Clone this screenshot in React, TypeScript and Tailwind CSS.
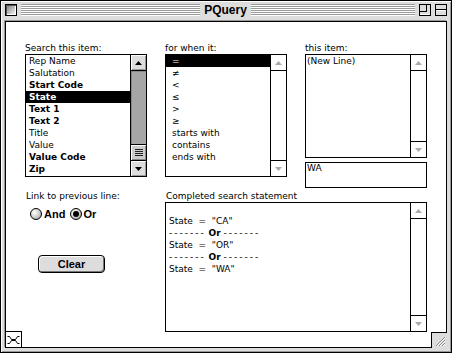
import React from "react";

const Up = ({ c }: { c: string }) => (
  <svg width="7" height="4" viewBox="0 0 7 4">
    <polygon points="3.5,0 7,4 0,4" fill={c} />
  </svg>
);
const Down = ({ c }: { c: string }) => (
  <svg width="7" height="4" viewBox="0 0 7 4">
    <polygon points="0,0 7,0 3.5,4" fill={c} />
  </svg>
);

const ActiveScroll = () => (
  <div className="w-[16px] border-l border-black flex flex-col">
    <div className="h-[16px] border-b border-black bg-[#dddddd] flex items-center justify-center shadow-[inset_1px_1px_0_#fff,inset_-1px_-1px_0_#999]">
      <Up c="#000" />
    </div>
    <div className="flex-1 bg-[#a6a6a6] flex flex-col justify-end shadow-[inset_1px_1px_0_#888]">
      <div className="h-[16px] border-t border-black bg-[#cccccc] flex flex-col items-center justify-center gap-[1px] shadow-[inset_1px_1px_0_#fff,inset_-1px_-1px_0_#888]">
        <div className="w-[8px] h-[1px] bg-[#222]" />
        <div className="w-[8px] h-[1px] bg-[#222]" />
        <div className="w-[8px] h-[1px] bg-[#222]" />
        <div className="w-[8px] h-[1px] bg-[#222]" />
      </div>
    </div>
    <div className="h-[16px] border-t border-black bg-[#dddddd] flex items-center justify-center shadow-[inset_1px_1px_0_#fff,inset_-1px_-1px_0_#999]">
      <Down c="#000" />
    </div>
  </div>
);

const InactiveScroll = () => (
  <div className="w-[16px] border-l border-black bg-white flex flex-col justify-between">
    <div className="h-[16px] border-b border-black flex items-center justify-center">
      <Up c="#aaaaaa" />
    </div>
    <div className="h-[16px] border-t border-black flex items-center justify-center">
      <Down c="#aaaaaa" />
    </div>
  </div>
);

type Item = { t: string; b?: boolean; sel?: boolean };

const list1: Item[] = [
  { t: "Rep Name" },
  { t: "Salutation" },
  { t: "Start Code", b: true },
  { t: "State", b: true, sel: true },
  { t: "Text 1", b: true },
  { t: "Text 2", b: true },
  { t: "Title" },
  { t: "Value" },
  { t: "Value Code", b: true },
  { t: "Zip", b: true },
];

const list2: Item[] = [
  { t: "=", sel: true },
  { t: "≠" },
  { t: "<" },
  { t: "≤" },
  { t: ">" },
  { t: "≥" },
  { t: "starts with" },
  { t: "contains" },
  { t: "ends with" },
];

const Row = ({ it, pl }: { it: Item; pl: string }) => (
  <div
    className={
      "h-[12px] leading-[12px] whitespace-pre " +
      pl +
      (it.sel ? " bg-black text-white" : " text-black") +
      (it.b ? " font-bold" : "")
    }
  >
    {it.t}
  </div>
);

const Label = ({ children }: { children: React.ReactNode }) => (
  <div className="h-[11px] leading-[11px] text-black whitespace-pre">{children}</div>
);

const Radio = ({ on }: { on?: boolean }) => (
  <div className="w-[12px] h-[12px] rounded-full border border-black bg-[radial-gradient(circle_at_35%_35%,#ffffff_0%,#cccccc_55%,#888888_100%)] flex items-center justify-center">
    {on && <div className="w-[6px] h-[6px] rounded-full bg-black" />}
  </div>
);

const Dashes = () => (
  <div className="h-[12px] leading-[12px] whitespace-pre">
    <span className="tracking-[2px]">-------</span> <span className="font-bold">Or</span>{" "}
    <span className="tracking-[2px]">-------</span>
  </div>
);

export default function App() {
  return (
    <div className="w-[452px] h-[353px] border border-black bg-[#dddddd] flex flex-col font-['DejaVu_Sans',sans-serif] text-[9px] shadow-[inset_1px_1px_0_#fff,inset_-1px_-1px_0_#999]">
      {/* title bar */}
      <div className="h-[20px] flex items-start pt-[3px] pl-[4px] pr-[4px]">
        <div className="w-[12px] h-[12px] border border-black bg-[linear-gradient(135deg,#777777,#ffffff)] shadow-[inset_1px_1px_0_#555,inset_-1px_-1px_0_#fff]" />
        <div className="ml-[4px] w-[179px] h-[12px] bg-[repeating-linear-gradient(to_bottom,#999999_0px,#999999_1px,#ffffff_1px,#ffffff_2px)]" />
        <div className="w-[51px] h-[12px] flex items-center justify-center font-['Liberation_Sans',sans-serif] font-bold text-[12px] leading-[12px] text-black">
          PQuery
        </div>
        <div className="flex-1 h-[12px] bg-[repeating-linear-gradient(to_bottom,#999999_0px,#999999_1px,#ffffff_1px,#ffffff_2px)]" />
        <svg className="ml-[4px]" width="12" height="12" viewBox="0 0 12 12">
          <rect x="0.5" y="0.5" width="11" height="11" fill="#dddddd" stroke="#000" />
          <rect x="0.5" y="0.5" width="7" height="7" fill="none" stroke="#000" />
          <line x1="1.5" y1="10.5" x2="10.5" y2="10.5" stroke="#fff" />
        </svg>
        <svg className="ml-[4px]" width="12" height="12" viewBox="0 0 12 12">
          <rect x="0.5" y="0.5" width="11" height="11" fill="#dddddd" stroke="#000" />
          <line x1="0.5" y1="5.5" x2="11.5" y2="5.5" stroke="#000" />
          <line x1="1.5" y1="6.5" x2="10.5" y2="6.5" stroke="#fff" />
        </svg>
      </div>

      {/* content */}
      <div className="relative flex-1 mx-[4px] mb-[4px] border border-black bg-white flex pt-[21px] pl-[19px] shadow-[-1px_-1px_0_#999]">
        {/* column 1 */}
        <div className="w-[122px] flex flex-col">
          <Label>Search this item:</Label>
          <div className="h-[123px] border border-black flex">
            <div className="flex-1 flex flex-col">
              {list1.map((it) => (
                <Row key={it.t} it={it} pl="pl-[3px]" />
              ))}
            </div>
            <ActiveScroll />
          </div>
          <div className="mt-[14px] pl-[1px]">
            <Label>Link to previous line:</Label>
          </div>
          <div className="mt-[6px] h-[12px] flex items-center pl-[5px] font-['Liberation_Sans',sans-serif] font-bold text-[11px] text-black">
            <Radio />
            <span className="ml-[2px]">And</span>
            <div className="ml-[5px]">
              <Radio on />
            </div>
            <span className="ml-[1px]">Or</span>
          </div>
          <button className="mt-[35px] ml-[13px] w-[67px] h-[18px] rounded-[4px] border border-black bg-[#dddddd] shadow-[inset_1px_1px_0_#fff,inset_-1px_-1px_0_#777] flex items-center justify-center font-['Liberation_Sans',sans-serif] font-bold text-[11px] text-black">
            Clear
          </button>
        </div>

        {/* right area */}
        <div className="ml-[18px] w-[262px] flex flex-col">
          <div className="flex gap-[18px]">
            <div className="w-[122px] flex flex-col">
              <Label>for when it:</Label>
              <div className="h-[123px] border border-black flex">
                <div className="flex-1 flex flex-col">
                  {list2.map((it) => (
                    <Row key={it.t} it={it} pl="pl-[6px]" />
                  ))}
                </div>
                <InactiveScroll />
              </div>
            </div>
            <div className="w-[122px] flex flex-col">
              <Label>this item:</Label>
              <div className="h-[104px] border border-black flex">
                <div className="flex-1 flex flex-col">
                  <Row it={{ t: "(New Line)" }} pl="pl-[1px]" />
                </div>
                <InactiveScroll />
              </div>
              <div className="mt-[4px] h-[26px] border border-black pl-[1px] leading-[11px] text-black">WA</div>
            </div>
          </div>
          <div className="mt-[3px] pl-[1px]">
            <Label>Completed search statement</Label>
          </div>
          <div className="h-[130px] border border-black flex">
            <div className="flex-1 flex flex-col pl-[3px] text-black">
              <div className="h-[12px]" />
              <div className="h-[12px] leading-[12px] whitespace-pre">State  =  "CA"</div>
              <Dashes />
              <div className="h-[12px] leading-[12px] whitespace-pre">State  =  "OR"</div>
              <Dashes />
              <div className="h-[12px] leading-[12px] whitespace-pre">State  =  "WA"</div>
            </div>
            <InactiveScroll />
          </div>
        </div>

        {/* bottom-left widget */}
        <div className="absolute left-[-1px] bottom-[-1px] w-[17px] h-[17px] border border-black bg-white">
          <svg width="15" height="15" viewBox="0 0 15 15">
            <path d="M1.5 4.5 H3.5 L5.5 7.5 H9.5 L11.5 4.5 H13.5" fill="none" stroke="#000" />
            <path d="M1.5 11.5 H3.5 L5.5 8.5 H9.5 L11.5 11.5 H13.5" fill="none" stroke="#000" />
          </svg>
        </div>

        {/* grow box */}
        <div className="absolute right-[-1px] bottom-[-1px] w-[16px] h-[16px] border-l border-t border-black bg-[#dddddd]">
          <svg width="15" height="15" viewBox="0 0 15 15">
            <line x1="4" y1="13" x2="13" y2="4" stroke="#888" />
            <line x1="5" y1="13" x2="13" y2="5" stroke="#fff" />
            <line x1="7" y1="13" x2="13" y2="7" stroke="#888" />
            <line x1="8" y1="13" x2="13" y2="8" stroke="#fff" />
            <line x1="10" y1="13" x2="13" y2="10" stroke="#888" />
            <line x1="11" y1="13" x2="13" y2="11" stroke="#fff" />
          </svg>
        </div>
      </div>
    </div>
  );
}
